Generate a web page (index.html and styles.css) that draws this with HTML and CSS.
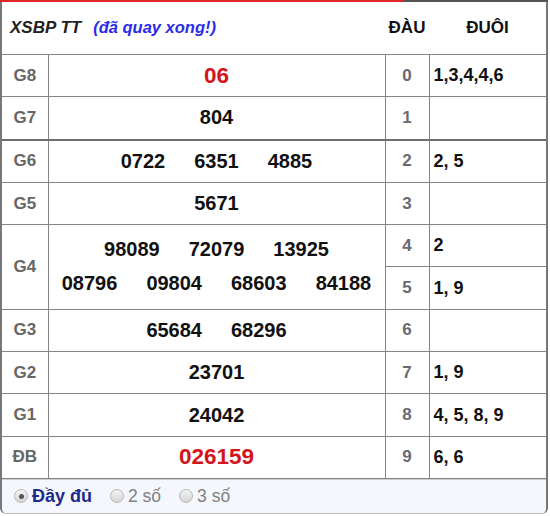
FILE: index.html
```html
<!DOCTYPE html>
<html lang="vi">
<head>
<meta charset="utf-8">
<title>XSBP</title>
<link rel="stylesheet" href="styles.css">
</head>
<body>
<div class="wrap">
  <div class="topbar"><div class="red"></div><div class="dark"></div></div>
  <div class="box">
    <table class="kq">
      <colgroup>
        <col class="c-lbl"><col class="c-num"><col class="c-dau"><col class="c-duoi">
      </colgroup>
      <tr class="head">
        <td colspan="2" class="title"><span class="t1">XSBP TT</span><span class="t2">(đã quay xong!)</span></td>
        <td class="hd">ĐÀU</td>
        <td class="hd">ĐUÔI</td>
      </tr>
      <tr>
        <td class="lbl">G8</td>
        <td class="nums"><div class="line"><span class="n red-n">06</span></div></td>
        <td class="dau">0</td>
        <td class="duoi">1,3,4,4,6</td>
      </tr>
      <tr>
        <td class="lbl">G7</td>
        <td class="nums"><div class="line"><span class="n">804</span></div></td>
        <td class="dau">1</td>
        <td class="duoi"></td>
      </tr>
      <tr class="sep">
        <td class="lbl">G6</td>
        <td class="nums"><div class="line"><span class="n">0722</span><span class="n">6351</span><span class="n">4885</span></div></td>
        <td class="dau">2</td>
        <td class="duoi">2, 5</td>
      </tr>
      <tr>
        <td class="lbl">G5</td>
        <td class="nums"><div class="line"><span class="n">5671</span></div></td>
        <td class="dau">3</td>
        <td class="duoi"></td>
      </tr>
      <tr>
        <td class="lbl" rowspan="2">G4</td>
        <td class="nums" rowspan="2">
          <div class="line l2"><span class="n">98089</span><span class="n">72079</span><span class="n">13925</span></div>
          <div class="line l2"><span class="n">08796</span><span class="n">09804</span><span class="n">68603</span><span class="n">84188</span></div>
        </td>
        <td class="dau">4</td>
        <td class="duoi">2</td>
      </tr>
      <tr>
        <td class="dau">5</td>
        <td class="duoi">1, 9</td>
      </tr>
      <tr>
        <td class="lbl">G3</td>
        <td class="nums"><div class="line"><span class="n">65684</span><span class="n">68296</span></div></td>
        <td class="dau">6</td>
        <td class="duoi"></td>
      </tr>
      <tr>
        <td class="lbl">G2</td>
        <td class="nums"><div class="line"><span class="n">23701</span></div></td>
        <td class="dau">7</td>
        <td class="duoi">1, 9</td>
      </tr>
      <tr>
        <td class="lbl">G1</td>
        <td class="nums"><div class="line"><span class="n">24042</span></div></td>
        <td class="dau">8</td>
        <td class="duoi">4, 5, 8, 9</td>
      </tr>
      <tr>
        <td class="lbl">ĐB</td>
        <td class="nums"><div class="line"><span class="n red-n">026159</span></div></td>
        <td class="dau">9</td>
        <td class="duoi">6, 6</td>
      </tr>
    </table>
    <div class="foot">
      <span class="opt"><span class="radio on"></span><span class="opt-t sel">Đầy đủ</span></span>
      <span class="opt"><span class="radio"></span><span class="opt-t">2 số</span></span>
      <span class="opt"><span class="radio"></span><span class="opt-t">3 số</span></span>
    </div>
  </div>
</div>
</body>
</html>
```
FILE: styles.css
```css
html, body {
  margin: 0;
  padding: 0;
  background: #fff;
}
body {
  font-family: "Liberation Sans", Arial, sans-serif;
  color: #000;
}
.wrap {
  width: 548px;
}
.topbar {
  display: flex;
  height: 2px;
}
.topbar .red {
  width: 403px;
  background: #e0262a;
}
.topbar .dark {
  flex: 1;
  background: #555;
}
.box {
  border-left: 2px solid #777;
  border-right: 2px solid #777;
  border-bottom: 1px solid #bbb;
  border-radius: 0 0 6px 6px;
  overflow: hidden;
}
.kq {
  width: 544px;
  border-collapse: collapse;
  table-layout: fixed;
}
.c-lbl { width: 46px; }
.c-num { width: 337px; }
.c-dau { width: 44px; }
.c-duoi { width: 117px; }

.kq td {
  border: 1px solid #858585;
  padding: 0;
  height: 41.3px;
  vertical-align: middle;
}
.kq tr td:first-child { border-left: none; }
.kq tr td:last-child { border-right: none; }

.kq tr.head td {
  height: 52px;
  border-top: none;
  border-left: none;
  border-right: none;
}
.title {
  padding-left: 8px !important;
  white-space: nowrap;
}
.t1 {
  font-size: 17px;
  font-weight: bold;
  font-style: italic;
  color: #222;
}
.t2 {
  margin-left: 12px;
  font-size: 16.5px;
  font-weight: bold;
  font-style: italic;
  color: #2b2be8;
}
.hd {
  text-align: center;
  font-size: 17px;
  font-weight: bold;
  color: #111;
}
.kq tr.sep td {
  border-top: 2px solid #6e6e6e;
}
.lbl {
  text-align: center;
  font-size: 17px;
  font-weight: bold;
  color: #666;
}
.nums {
  text-align: center;
}
.line {
  display: flex;
  justify-content: center;
}
.line.l2 {
  height: 34px;
  align-items: center;
}
.n {
  padding: 0 14.5px;
  font-size: 20px;
  font-weight: bold;
  color: #111;
}
.n.red-n {
  font-size: 22.5px;
  color: #d4141c;
}
.dau {
  text-align: center;
  font-size: 17px;
  font-weight: bold;
  color: #6a6a74;
}
.duoi {
  padding-left: 4px !important;
  font-size: 18px;
  font-weight: bold;
  color: #111;
}
.foot {
  height: 33px;
  background: #f4f7fd;
  display: flex;
  align-items: center;
  padding-left: 12px;
  border-top: 1px solid #ccc;
}
.opt {
  display: flex;
  align-items: center;
  margin-right: 18px;
}
.radio {
  width: 12px;
  height: 12px;
  border-radius: 50%;
  border: 1px solid #b8b8b8;
  background: linear-gradient(#f4f4f4, #d6d6d6);
  position: relative;
  margin-right: 4px;
}
.radio.on::after {
  content: "";
  position: absolute;
  left: 3.5px;
  top: 3.5px;
  width: 5px;
  height: 5px;
  border-radius: 50%;
  background: #555;
}
.opt-t {
  font-size: 17.5px;
  color: #808080;
}
.opt-t.sel {
  font-size: 18px;
  font-weight: bold;
  color: #1c2a8c;
}
```
